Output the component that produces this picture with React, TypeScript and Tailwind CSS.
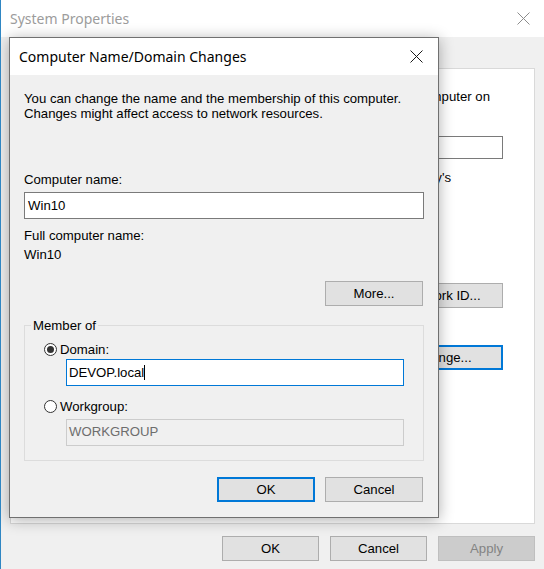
import React from "react";

function Radio({ checked }: { checked?: boolean }) {
  return (
    <span className="w-[13px] h-[13px] rounded-full border border-[#333333] bg-white flex items-center justify-center shrink-0">
      {checked && <span className="w-[7px] h-[7px] rounded-full bg-[#333333]" />}
    </span>
  );
}

function CloseIcon({ color, size }: { color: string; size: number }) {
  return (
    <svg width={size} height={size} viewBox={`0 0 ${size} ${size}`}>
      <path
        d={`M0.5 0.5 L${size - 0.5} ${size - 0.5} M${size - 0.5} 0.5 L0.5 ${size - 0.5}`}
        stroke={color}
        strokeWidth="1"
        fill="none"
      />
    </svg>
  );
}

export default function App() {
  return (
    <div className="relative w-[544px] h-[569px] overflow-hidden bg-[#f0f0f0] border-l border-[#2f86c3] font-['Liberation_Sans',Arial,sans-serif] text-[13.2px] text-black">
      {/* Background window title bar */}
      <div className="h-[37px] bg-white flex items-center justify-between pl-[9px] pr-[14px]">
        <span className="font-['Noto_Sans',sans-serif] text-[14px] text-[#9c9c9c]">System Properties</span>
        <CloseIcon color="#8c8c8c" size={13} />
      </div>

      {/* Tabs (mostly hidden under the dialog) */}
      <div className="h-[31px] flex items-end pl-[11px]">
        <div className="h-[21px] w-[100px] border border-b-0 border-[#d9d9d9] bg-white" />
        <div className="h-[21px] w-[70px] border border-b-0 border-l-0 border-[#d9d9d9]" />
        <div className="h-[21px] w-[72px] border border-b-0 border-l-0 border-[#d9d9d9]" />
        <div className="h-[21px] w-[118px] border border-b-0 border-l-0 border-[#d9d9d9]" />
        <div className="h-[21px] w-[61px] border border-b-0 border-l-0 border-[#d9d9d9] flex items-center justify-end pr-[2px] text-[#3b5f86]">Remote</div>
      </div>

      {/* Tab panel */}
      <div className="ml-[9px] w-[525px] h-[456px] bg-white border border-[#d9d9d9] flex flex-col items-end pr-[31px] pt-[20px] leading-[15px]">
        <div className="whitespace-nowrap mr-[13px]">computer on</div>
        <div className="mt-[32px] w-[370px] h-[23px] border border-[#7a7a7a] bg-white" />
        <div className="mt-[11px] whitespace-nowrap mr-[52px]">"Mary's</div>
        <div className="mt-[98px] w-[114px] h-[25px] border border-[#adadad] bg-[#e1e1e1] flex items-center justify-center pr-[7px]">Network ID...</div>
        <div className="mt-[37px] w-[114px] h-[25px] border-2 border-[#0078d7] bg-[#e1e1e1] flex items-center justify-center pr-[6px]">Change...</div>
      </div>

      {/* Bottom buttons */}
      <div className="mt-[12px] flex justify-end gap-[11px] pr-[9px]">
        <div className="w-[97px] h-[25px] border border-[#adadad] bg-[#e1e1e1] flex items-center justify-center">OK</div>
        <div className="w-[97px] h-[25px] border border-[#adadad] bg-[#e1e1e1] flex items-center justify-center">Cancel</div>
        <div className="w-[97px] h-[25px] border border-[#bfbfbf] bg-[#cccccc] text-[#838383] flex items-center justify-center">Apply</div>
      </div>

      {/* Dialog */}
      <div className="absolute left-[8px] top-[37px] w-[430px] h-[481px] border border-[#707070] bg-[#f0f0f0] shadow-[0_2px_14px_rgba(0,0,0,0.32)] flex flex-col">
        <div className="h-[37px] bg-white flex items-center justify-between pl-[9px] pr-[15px]">
          <span className="font-['Noto_Sans',sans-serif] text-[14px] text-black">Computer Name/Domain Changes</span>
          <CloseIcon color="#1a1a1a" size={13} />
        </div>
        <div className="flex flex-col pl-[14px] leading-[15px]">
          <div className="pt-[16px]">
            You can change the name and the membership of this computer.
            <br />
            Changes might affect access to network resources.
          </div>
          <div className="mt-[51px]">Computer name:</div>
          <div className="mt-[5px] w-[400px] h-[27px] border border-[#7a7a7a] bg-white flex items-center pl-[3px]">Win10</div>
          <div className="mt-[9px]">Full computer name:</div>
          <div className="mt-[4px]">Win10</div>
          <div className="mt-[19px] self-end mr-[15px] w-[98px] h-[25px] border border-[#adadad] bg-[#e1e1e1] flex items-center justify-center">More...</div>

          <div className="relative mt-[19px] w-[400px] h-[136px] border border-[#dcdcdc] flex flex-col pl-[19px] pt-[16px]">
            <span className="absolute -top-[8px] left-[6px] px-[2px] bg-[#f0f0f0]">Member of</span>
            <div className="h-[15px] flex items-center gap-[3px]">
              <Radio checked />
              <span>Domain:</span>
            </div>
            <div className="mt-[2px] ml-[22px] w-[338px] h-[27px] border border-[#0078d7] bg-white flex items-center pl-[2px]">
              <span>DEVOP.local</span>
              <span className="w-[1px] h-[15px] bg-black" />
            </div>
            <div className="mt-[13px] h-[15px] flex items-center gap-[3px]">
              <Radio />
              <span>Workgroup:</span>
            </div>
            <div className="mt-[5px] ml-[22px] w-[338px] h-[27px] border border-[#cccccc] bg-[#f0f0f0] text-[#6d6d6d] flex items-center pl-[2px] pb-[2px]">WORKGROUP</div>
          </div>

          <div className="mt-[16px] self-end mr-[15px] flex gap-[10px]">
            <div className="w-[98px] h-[25px] border-2 border-[#0078d7] bg-[#e1e1e1] flex items-center justify-center">OK</div>
            <div className="w-[98px] h-[25px] border border-[#adadad] bg-[#e1e1e1] flex items-center justify-center">Cancel</div>
          </div>
        </div>
      </div>
    </div>
  );
}
